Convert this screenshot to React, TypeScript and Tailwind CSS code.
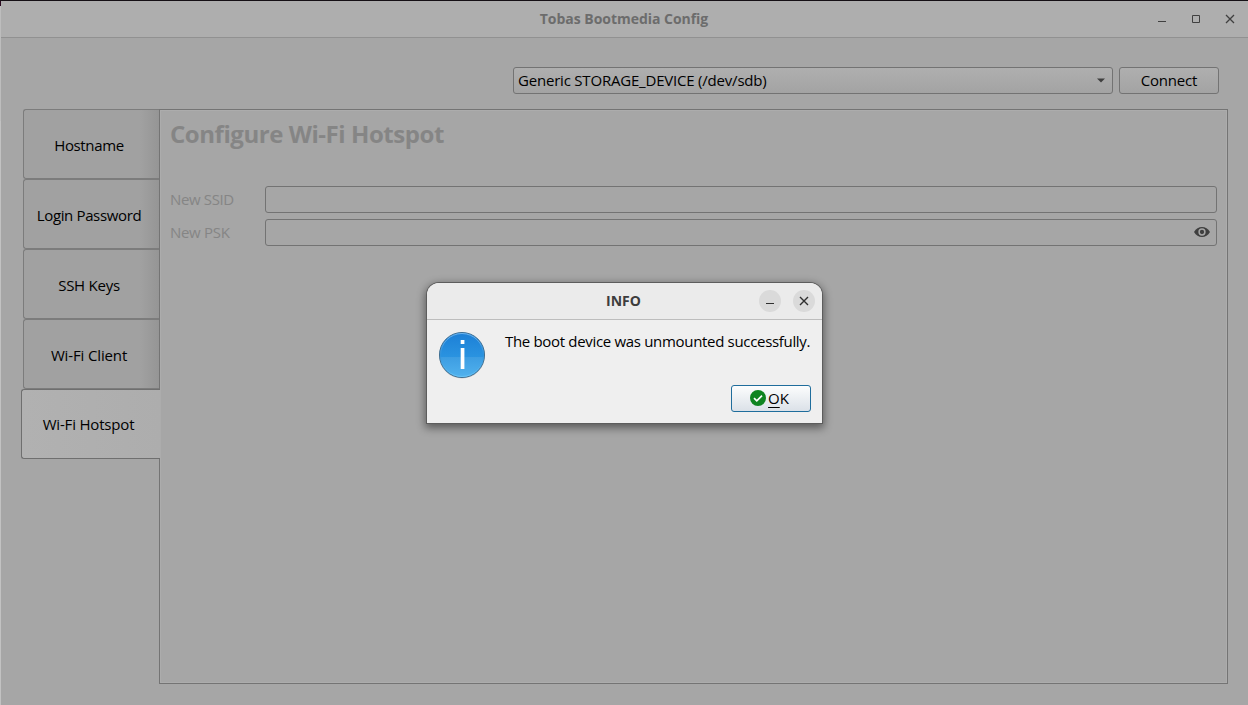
type Tab = { label: string; spacing: string };

const tabs: Tab[] = [
  { label: "Hostname", spacing: "tracking-[-0.35px]" },
  { label: "Login Password", spacing: "tracking-[-0.36px]" },
  { label: "SSH Keys", spacing: "tracking-[-0.25px]" },
  { label: "Wi-Fi Client", spacing: "tracking-[-0.14px]" },
];

function TitleBar() {
  return (
    <header className="relative flex h-[37px] shrink-0 items-center justify-end border-b border-[#919191] bg-[#aeaeae] pr-[10px]">
      <h1 className="pointer-events-none absolute inset-x-0 top-[8px] pr-px text-center text-[14px] leading-5 font-bold tracking-[-0.03px] text-[#6c6c6c]">
        Tobas Bootmedia Config
      </h1>
      <svg width="86" height="16" viewBox="0 0 86 16" fill="none" stroke="#404040" className="mb-[2px]">
        <path d="M6 11.500h8" />
        <path d="M40.500 5.500h7v7h-7z" />
        <path d="M74 5l8 8M82 5l-8 8" strokeWidth="1.300" />
      </svg>
    </header>
  );
}

function Sidebar() {
  return (
    <nav className="flex w-[137px] shrink-0 flex-col items-end">
      {tabs.map((t) => (
        <div
          key={t.label}
          className="mr-px flex h-[70px] w-[136px] items-center justify-center rounded-l-[3px] border border-r-0 border-[#7c7c7c] bg-[linear-gradient(90deg,#a1a1a1_0%,#a1a1a1_86%,#959595_100%)] pt-px pr-[5px] text-black"
        >
          <span className={t.spacing}>{t.label}</span>
        </div>
      ))}
      <div className="relative flex h-[70px] w-[139px] items-center justify-center rounded-l-[3px] border border-r-0 border-[#6f6f6f] bg-linear-to-r from-[#b1b1b1] to-[#adadad] pr-[5px] pb-px text-black">
        <span className="tracking-[-0.18px]">Wi-Fi Hotspot</span>
      </div>
    </nav>
  );
}

function EyeIcon() {
  return (
    <svg width="16" height="12" viewBox="0 0 16 12">
      <path d="M0 6C2 2.500 4.700 1 8 1s6 1.500 8 5c-2 3.500-4.700 5-8 5S2 9.500 0 6z" fill="#3f3f3f" />
      <circle cx="8" cy="6" r="2.900" fill="#3f3f3f" stroke="#a6a6a6" strokeWidth="1.500" />
    </svg>
  );
}

function Panel() {
  return (
    <section className="-ml-px h-[575px] w-[1069px] border border-[#747474] px-[10px] pt-[8px] text-[#858585] shadow-[inset_0_0_0_1px_#acacac]">
      <h2 className="h-8 text-[24px] leading-8 font-bold tracking-[-0.45px] whitespace-nowrap">Configure Wi-Fi Hotspot</h2>
      <div className="mt-[36px] flex flex-col gap-[6px]">
        <div className="flex h-[27px] items-center">
          <label className="w-[95px] pb-[2px] tracking-[-0.36px]">New SSID</label>
          <div className="h-[27px] w-[952px] rounded-[3px] border border-[#737373]" />
        </div>
        <div className="flex h-[27px] items-center">
          <label className="w-[95px] pb-[2px] tracking-[-0.3px]">New PSK</label>
          <div className="flex h-[27px] w-[952px] items-center justify-end rounded-[3px] border border-[#737373] pr-[6px] pb-[2px]">
            <EyeIcon />
          </div>
        </div>
      </div>
    </section>
  );
}

function InfoIcon() {
  return (
    <svg width="48" height="48" viewBox="0 0 48 48">
      <defs>
        <linearGradient id="info" x1="0" y1="0" x2="0" y2="1">
          <stop offset="0" stopColor="#1c7fd6" />
          <stop offset="0.540" stopColor="#2a93e0" />
          <stop offset="0.550" stopColor="#3d9de2" />
          <stop offset="1" stopColor="#51b2ee" />
        </linearGradient>
        <linearGradient id="rim" x1="0" y1="0" x2="0" y2="1">
          <stop offset="0" stopColor="#6fb5ee" />
          <stop offset="0.500" stopColor="#2f92dc" />
          <stop offset="1" stopColor="#68c4f7" />
        </linearGradient>
      </defs>
      <circle cx="24" cy="24.500" r="23" fill="#000" opacity="0.150" />
      <circle cx="24" cy="24" r="22.500" fill="url(#info)" stroke="#3c6d91" />
      <circle cx="24" cy="24" r="21.500" fill="none" stroke="url(#rim)" />
      <path d="M22.700 9h3.700v4h-3.700zM22.700 17h3.700v21h-3.700z" fill="#fff" />
    </svg>
  );
}

function Dialog() {
  return (
    <div
      role="dialog"
      className="absolute top-[282px] left-[427px] flex h-[140px] w-[395px] flex-col rounded-t-[12px] bg-[#efefef] shadow-[0_0_0_1px_#5d5d5d,0_3px_8px_2px_rgba(0,0,0,0.45)]"
    >
      <div className="relative flex h-[37px] items-center justify-end gap-[12px] rounded-t-[12px] border-b border-[#bdbdbd] bg-[#ebebeb] pr-[7px]">
        <h2 className="absolute inset-x-0 top-[8px] pr-[2px] text-center text-[14px] leading-5 font-bold text-[#3d3d3d]">INFO</h2>
        <svg width="22" height="22" viewBox="0 0 22 22" fill="none">
          <circle cx="11" cy="11" r="11" fill="#dadada" />
          <path d="M7 13.500h8" stroke="#303030" />
        </svg>
        <svg width="22" height="22" viewBox="0 0 22 22" fill="none">
          <circle cx="11" cy="11" r="11" fill="#dadada" />
          <path d="M7 7l8 8M15 7l-8 8" stroke="#303030" strokeWidth="1.400" />
        </svg>
      </div>
      <div className="flex pt-[11px] pl-[11px] text-black">
        <InfoIcon />
        <p className="ml-[19px] tracking-[-0.32px] whitespace-nowrap">The boot device was unmounted successfully.</p>
      </div>
      <div className="mt-[6px] flex justify-end pr-[11px]">
        <button className="flex h-[27px] w-[80px] items-center justify-center gap-[2px] rounded-[3px] border border-[#1f6d9c] bg-linear-to-b from-[#fcfdfd] to-[#dbe1e8] pr-[3px] text-black">
          <svg width="16" height="16" viewBox="0 0 16 16" className="mb-px">
            <circle cx="8" cy="8" r="8" fill="#0f8420" />
            <path d="M4 8.200l2.800 2.700L12 5.700" fill="none" stroke="#fff" strokeWidth="1.700" />
          </svg>
          <span className="pb-[2px]">
            <span className="underline decoration-1 underline-offset-[3px]">O</span>K
          </span>
        </button>
      </div>
    </div>
  );
}

export default function App() {
  return (
    <div className="relative flex h-[705px] w-[1248px] overflow-hidden border-t border-[#151015] bg-[#a6a6a6] font-['Open_Sans','Noto_Sans',sans-serif] text-[15px] leading-5">
      <div className="flex w-px shrink-0 flex-col bg-[#a4a4a4]">
        <div className="h-[5px] bg-[#2a0a20]" />
        <div className="h-[115px] bg-[#bdbdbd]" />
        <div className="flex-1 bg-[#c2c2c2]" />
      </div>
      <div className="flex flex-1 flex-col">
        <TitleBar />
        <div className="mt-[29px] flex justify-end gap-[6px] pr-[29px] text-black">
          <div className="flex h-[27px] w-[600px] items-center justify-between rounded-[3px] border border-[#737373] bg-linear-to-b from-[#afafaf] to-[#a3a3a3] pr-[7px] pl-[4px]">
            <span className="pb-[2px] tracking-[-0.2px]">Generic STORAGE_DEVICE (/dev/sdb)</span>
            <svg width="8" height="5" viewBox="0 0 8 5">
              <path d="M0 0.500h8L4 4.500z" fill="#3f3f3f" />
            </svg>
          </div>
          <button className="h-[27px] w-[100px] rounded-[3px] border border-[#737373] bg-linear-to-b from-[#afafaf] to-[#a3a3a3] pb-[2px] tracking-[-0.2px]">
            Connect
          </button>
        </div>
        <main className="mt-[15px] flex pl-[22px]">
          <Sidebar />
          <Panel />
        </main>
      </div>
      <Dialog />
    </div>
  );
}
